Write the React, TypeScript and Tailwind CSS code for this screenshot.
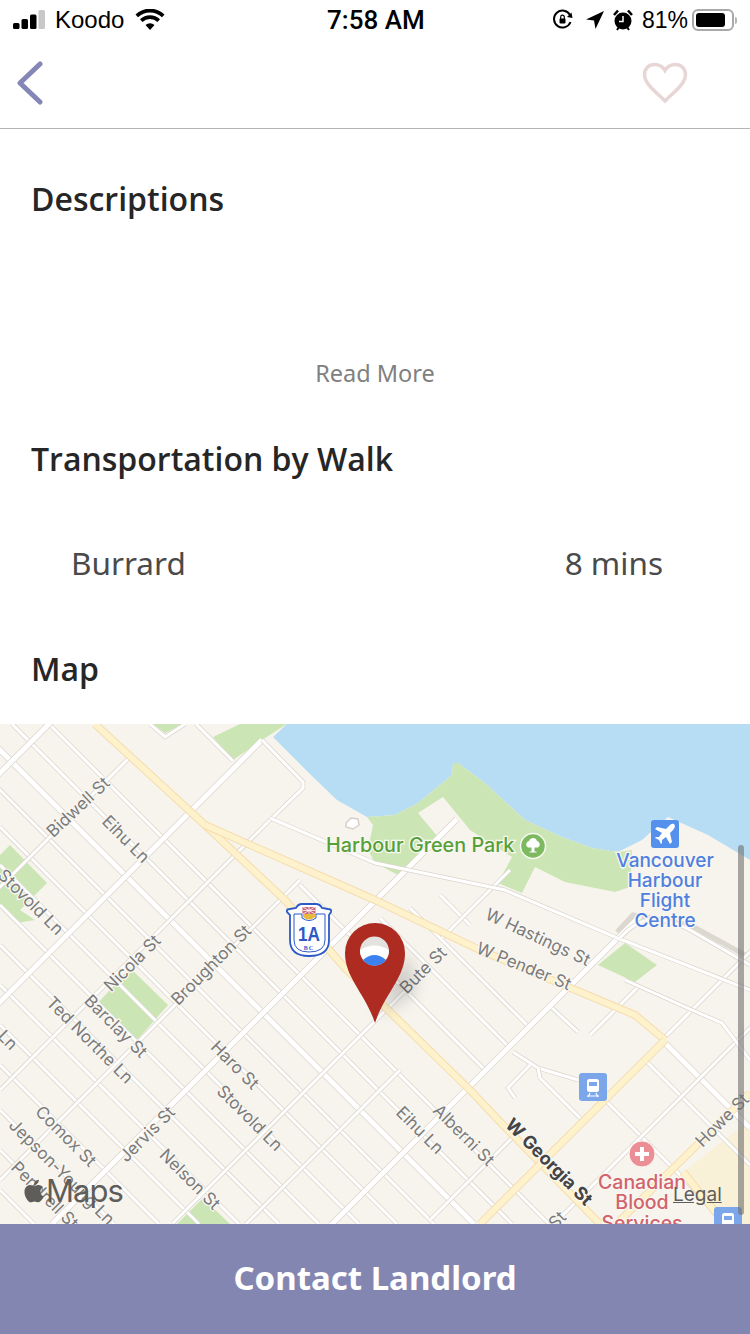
import { FaApple } from 'react-icons/fa';

const headingFont = "font-['Open_Sans',sans-serif]";

// y = x + d
const downRoads: [number, number, number, number?][] = [
  [675, 49, 549], [712, 12, 512], [750, -10, 474, 1], [790, -10, 434], [827, 0, 397], [865, 0, 359],
  [905, 0, 319], [945, 0, 279], [985, 0, 239], [1025, 0, 199], [1065, 0, 159], [1110, 0, 114], [1150, 0, 74], [1190, 0, 34],
  [585, 300, 485], [538, 380, 509], [498, 410, 529], [455, 440, 470], [495, 607, 729], [415, 647, 750], [378, 665, 750, 1],
  [528, 196, 233],
];
// y = c - x
const upRoads: [number, number, number, number?][] = [
  [773, -5, 50, 1], [887, -5, 128], [1002, -5, 262, 1], [1090, 0, 268], [1180, 0, 300], [1276, 52, 457, 1],
  [1396, 173, 420], [1470, 246, 400], [1556, 331, 640, 1], [1650, 430, 520], [1702, 665, 755], [1778, 554, 755],
  [1380, 442, 510], [1625, 590, 640],
];
const polyRoads = [
  "M262 740 L303 782 L303 788 L268 822",
  "M150 724 L165 737 L185 724",
  "M270 818 L375 863 L505 890 L615 937 L750 990",
  "M625 980 L692 1010 L722 1023 L750 1060",
  "M513 1052 L538 1068 L578 1080",
  "M530 1065 L508 1088 L515 1098",
  "M538 1068 L540 1078 L580 1118",
  "M552 1008 L578 1032",
  "M620 938 C640 915 660 915 690 930 L750 965",
];
const yellowRoads = [
  "M95 724 L205 825 L285 900 L345 968 L385 1007 L470 1090 L505 1127 L600 1224",
  "M205 825 L375 900 L480 950 L635 1015 L665 1040",
  "M665 1040 L480 1224",
  "M750 1093 L590 1250",
  "M683 1172 L725 1224",
];
const labels: [string, number, number, number][] = [
  ["Bidwell St", 78, 807, -43], ["Eihu Ln", 126, 839, 45], ["Stovold Ln", 31, 902, 45],
  ["Nicola St", 132, 963, -45], ["Broughton St", 211, 965, -45], ["Barclay St", 116, 1026, 45],
  ["Ted Northe Ln", 90, 1040, 45], ["Haro St", 235, 1065, 45], ["Stovold Ln", 250, 1118, 45],
  ["Comox St", 66, 1136, 45], ["Jervis St", 147, 1134, -45], ["Jepson-Young Ln", 62, 1172, 45],
  ["Pendrell St", 45, 1195, 45], ["Nelson St", 190, 1179, 45], ["Bute St", 423, 970, -45],
  ["W Hastings St", 538, 937, 25], ["W Pender St", 524, 966, 22], ["Alberni St", 464, 1135, 45],
  ["Eihu Ln", 420, 1130, 45], ["Howe St", 722, 1120, -45], ["St", 557, 1220, -45], ["Ln", 8, 1040, 45],
];

function Road({ d, w = 3 }: { d: string; w?: number }) {
  return (
    <>
      <path d={d} fill="none" stroke="#dbd6cd" strokeWidth={w + 1.5} />
      <path d={d} fill="none" stroke="#ffffff" strokeWidth={w} />
    </>
  );
}

function StatusBar() {
  return (
    <div className="h-[40px] flex items-center justify-between pl-[13px] pr-[13px] relative font-['Liberation_Sans',sans-serif] text-black">
      <div className="flex items-center">
        <svg width="34" height="20" viewBox="0 0 34 20">
          <rect x="0" y="13" width="6.500" height="6" rx="1.500" fill="#000" />
          <rect x="8.500" y="9" width="6.500" height="10" rx="1.500" fill="#000" />
          <rect x="17" y="4.500" width="6.500" height="14.500" rx="1.500" fill="#000" />
          <rect x="25.500" y="0" width="6.500" height="19" rx="1.500" fill="#c8c8c8" />
        </svg>
        <span className="text-[24px] ml-[8px] leading-none">Koodo</span>
        <svg width="30" height="22" viewBox="0 0 30 22" className="ml-[11px]">
          <path d="M15 21 L10.500 16 A7 7 0 0 1 19.500 16 Z" fill="#000" />
          <path d="M7.500 13 L5 10.300 A14.500 14.500 0 0 1 25 10.300 L22.500 13 A11 11 0 0 0 7.500 13 Z" fill="#000" />
          <path d="M3 8.200 L0.500 5.500 A21 21 0 0 1 29.500 5.500 L27 8.200 A17.500 17.500 0 0 0 3 8.200 Z" fill="#000" />
        </svg>
      </div>
      <span className="absolute left-[327px] top-[7px] text-[26px] leading-none font-['Roboto',sans-serif] font-medium">7:58 AM</span>
      <div className="flex items-center">
        <svg width="22" height="22" viewBox="0 0 22 22" className="mr-[11px]">
          <path d="M18.500 13 A8.500 8.500 0 1 1 18 6" fill="none" stroke="#000" strokeWidth="2" />
          <path d="M20.500 9 L15 8 L19.500 3.500 Z" fill="#000" />
          <rect x="7.500" y="9.500" width="6" height="5" rx="1" fill="#000" />
          <path d="M8.700 10 V8 A1.800 1.800 0 0 1 12.300 8 V10" fill="none" stroke="#000" strokeWidth="1.200" />
        </svg>
        <svg width="20" height="22" viewBox="0 0 20 22" className="mr-[8px]">
          <path d="M19 2 L10.500 20 L9 11.500 L1 10.500 Z" fill="#000" />
        </svg>
        <svg width="20" height="24" viewBox="0 0 20 24" className="mr-[9px]">
          <circle cx="10" cy="13" r="8.500" fill="#000" />
          <path d="M10 8 V13.500 H6" fill="none" stroke="#fff" strokeWidth="1.500" />
          <path d="M1 7 L5 2.500 M19 7 L15 2.500" stroke="#000" strokeWidth="2.500" />
          <path d="M4 22 L6 19 M16 22 L14 19" stroke="#000" strokeWidth="2" />
        </svg>
        <span className="text-[23px] leading-none">81%</span>
        <div className="ml-[4px] flex items-center">
          <div className="w-[42px] h-[22px] border-2 border-[#a9a9a9] rounded-[6px] p-[2px] flex">
            <div className="w-[29px] bg-black rounded-[3px]" />
          </div>
          <div className="w-[2px] h-[7px] bg-[#b5b5b5] rounded-r ml-[1px]" />
        </div>
      </div>
    </div>
  );
}

function MapDrawing() {
  return (
    <svg width="750" height="500" viewBox="0 724 750 500" className="block font-['Inter',sans-serif]">
      <defs>
        <filter id="pinShadow" x="-100%" y="-100%" width="300%" height="300%"><feGaussianBlur stdDeviation="9" /></filter>
      </defs>
      <rect x="0" y="724" width="750" height="500" fill="#f7f4ee" />
      {/* water and shore */}
      <path d="M287 724 L273 737 L313 777 L337 800 L367 817 L395 815 L418 803 L452 775 L453 763 L458 763 L485 783 L525 820 L562 837 L592 848 L618 852 L642 840 L668 817 L708 835 L750 860 V724 Z" fill="#b6ddf3" />
      <path d="M213 737 L233 760 L262 740 L287 724 L273 737 L313 777 L337 800 L367 817 L373 825 L368 850 L375 863 L402 877 L438 837 L418 813 L443 797 L470 830 L512 857 L498 883 L522 893 L535 867 L565 882 L615 892 L630 887 L632 850 L618 852 L592 848 L562 837 L525 820 L485 783 L458 763 L453 763 L452 775 L418 803 L395 815 L367 817 L337 800 L313 777 L273 737 L287 724 L240 724 Z" fill="#cbe6b4" />
      <path d="M10 845 L47 883 L20 910 L35 920 L17 923 L0 907 V855 Z" fill="#cbe6b4" />
      <path d="M98 1003 L130 968 L168 1005 L137 1040 Z" fill="#cbe6b4" />
      <path d="M153 724 L165 733 L183 724 Z" fill="#cbe6b4" />
      <path d="M177 1224 L203 1198 L230 1224 Z" fill="#cbe6b4" />
      <path d="M598 965 L625 943 L657 965 L635 982 Z" fill="#cbe6b4" />
      <path d="M683 1172 L750 1120 V1224 H722 Z" fill="#f9f0d8" />
      <path d="M617 932 L633 915 L690 925 L745 955" fill="none" stroke="#dcd8cf" strokeWidth="5" />

      {downRoads.map(([d, x1, x2, thick], i) => (
        <Road key={`a${i}`} d={`M${x1} ${x1 + d} L${x2} ${x2 + d}`} w={thick ? 5 : 3} />
      ))}
      {upRoads.map(([c, x1, x2, thick], i) => (
        <Road key={`b${i}`} d={`M${x1} ${c - x1} L${x2} ${c - x2}`} w={thick ? 5 : 3} />
      ))}
      {polyRoads.map((d, i) => <Road key={`p${i}`} d={d} />)}
      {yellowRoads.map((d, i) => (
        <g key={`y${i}`}>
          <path d={d} fill="none" stroke="#f5dcae" strokeWidth="8" />
          <path d={d} fill="none" stroke="#fdf2cb" strokeWidth="6" />
        </g>
      ))}

      {labels.map(([t, x, y, r], i) => (
        <text key={i} x={x} y={y + 6} textAnchor="middle" transform={`rotate(${r} ${x} ${y})`} fontSize="17" fill="#7b7b7b" stroke="#f9f7f2" strokeWidth="2.500" paintOrder="stroke">{t}</text>
      ))}
      <text x="549" y="1168" textAnchor="middle" transform="rotate(45 549 1162)" fontSize="18" fontWeight="700" fill="#444444" stroke="#f9f7f2" strokeWidth="2.500" paintOrder="stroke">W Georgia St</text>

      <text x="326" y="852" fontSize="19.800" fontWeight="500" fill="#55a037" stroke="#f9f7f2" strokeWidth="2.500" paintOrder="stroke">Harbour Green Park</text>
      <circle cx="533" cy="846" r="12.500" fill="#7cb95f" stroke="#f9f7f2" strokeWidth="1.500" />
      <path d="M533 838 a4 4 0 0 1 4 3 a3.500 3.500 0 0 1 1 6.500 h-3.500 v4 h2 v1 h-7 v-1 h2 v-4 h-3.500 a3.500 3.500 0 0 1 1 -6.500 a4 4 0 0 1 3.500 -3 z" fill="#fff" />
      <path d="M346 823 L351 818 L358 819 L359 825 L353 829 L346 827 Z" fill="#fff" stroke="#d5d1c9" strokeWidth="1.500" />

      <rect x="651" y="820" width="28" height="28" rx="3" fill="#5590ec" />
      <path d="M674 824 c-2 -1 -4 1 -5 2 l-3 3 l-9 -2 l-2 2 l7 4 l-3 4 l-3 0 l-1 1 l4 2 l2 4 l1 -1 l0 -3 l4 -3 l4 7 l2 -2 l-2 -9 l3 -3 c1 -1 3 -4 1 -6 z" fill="#fff" />
      {[["Vancouver", 867], ["Harbour", 887], ["Flight", 907], ["Centre", 927]].map(([t, y]) => (
        <text key={t} x="665" y={y} textAnchor="middle" fontSize="19" fontWeight="500" fill="#4f80df" stroke="#f9f7f2" strokeWidth="2.500" paintOrder="stroke">{t}</text>
      ))}

      <rect x="579" y="1073" width="28" height="28" rx="3" fill="#7ba6ea" />
      <rect x="587" y="1079" width="12" height="13" rx="2.500" fill="#fff" />
      <rect x="589" y="1082" width="8" height="4" fill="#7ba6ea" />
      <path d="M588 1097 L590 1093 M598 1097 L596 1093 M587 1096 H599" stroke="#fff" strokeWidth="1.200" />

      <rect x="714" y="1207" width="28" height="28" rx="3" fill="#7ba6ea" />
      <rect x="722" y="1213" width="12" height="13" rx="2.500" fill="#fff" />
      <rect x="724" y="1216" width="8" height="4" fill="#7ba6ea" />

      <circle cx="642" cy="1154" r="13" fill="#ec8e95" stroke="#f9f7f2" strokeWidth="1" />
      <path d="M642 1147 V1161 M635 1154 H649" stroke="#fff" strokeWidth="4" />
      {[["Canadian", 1189], ["Blood", 1209], ["Services", 1230]].map(([t, y]) => (
        <text key={t} x="642" y={y} textAnchor="middle" fontSize="19.500" fontWeight="500" fill="#d2636c" stroke="#f9f7f2" strokeWidth="2.500" paintOrder="stroke">{t}</text>
      ))}

      {/* 1A highway shield */}
      <path d="M287 912 Q286 909 290 909 L296 908 Q298 904 302 904 H316 Q320 904 322 908 L328 909 Q332 909 331 912 L329 915 V940 Q329 956 309 956 Q290 956 290 940 V915 Z" fill="#fff" stroke="#2d59c8" strokeWidth="1.800" />
      <path d="M294 914 H302 V918 Q309 923 316 918 V914 H325 V940 Q325 952 309 952 Q294 952 294 940 Z" fill="#fff" stroke="#2d59c8" strokeWidth="1" />
      <rect x="302.500" y="907" width="13" height="7" fill="#c9657a" />
      <path d="M303 907 L315 914 M315 907 L303 914 M309 907 V914 M303 910.500 H315" stroke="#fff" strokeWidth="0.800" />
      <path d="M303 914 H315 V917 Q309 922 303 917 Z" fill="#e8b93d" />
      <text x="309" y="941" textAnchor="middle" fontSize="21" fontWeight="700" fill="#2d59c8" fontFamily="'Liberation Sans',sans-serif" textLength="22" lengthAdjust="spacingAndGlyphs">1A</text>
      <text x="309" y="950" textAnchor="middle" fontSize="6" fontWeight="700" fill="#2d59c8" fontFamily="'Liberation Serif',serif" letterSpacing="1">BC</text>

      {/* pin */}
      <path d="M378 1015 L405 950 L415 990 Z" fill="#000" opacity="0.2" filter="url(#pinShadow)" />
      <path d="M375 1023 C365 993 345 978 345 953 A30 30 0 0 1 405 953 C405 978 385 993 375 1023 Z" fill="#ae2b22" />
      <circle cx="374.500" cy="951" r="14.500" fill="#e4e2de" />
      <path d="M360 950 Q374.500 941 389 950 A14.500 14.500 0 0 1 360 950 Z" fill="#fff" />
      <path d="M363 960 Q374.500 950 386 960 A14.500 14.500 0 0 1 363 960 Z" fill="#3b82f0" />
    </svg>
  );
}

export default function App() {
  return (
    <main className="w-[750px] h-[1334px] bg-white overflow-hidden flex flex-col font-['Noto_Sans',sans-serif]">
      <StatusBar />
      <div className="h-[89px] border-b border-[#b5b5b5] flex items-center justify-between pl-[16px] pr-[62px] pb-[2px]">
        <svg width="30" height="44" viewBox="0 0 30 44">
          <path d="M24 3 L4 22 L24 41" fill="none" stroke="#8586b8" strokeWidth="5" strokeLinecap="round" strokeLinejoin="round" />
        </svg>
        <svg width="46" height="42" viewBox="0 0 46 42">
          <path d="M23 39 C14 30 2.500 22 2.500 12.500 C2.500 6.500 7 2.500 12.500 2.500 C17 2.500 21 5 23 8.500 C25 5 29 2.500 33.500 2.500 C39 2.500 43.500 6.500 43.500 12.500 C43.500 22 32 30 23 39 Z" fill="none" stroke="#e8d6d6" strokeWidth="3.500" />
        </svg>
      </div>

      <section className="px-[31px]">
        <h2 className={`${headingFont} mt-[50px] text-[32px] leading-[40px] font-semibold text-[#262626]`}>Descriptions</h2>
        <p className="mt-[139px] text-center text-[23.500px] leading-[30px] text-[#808080]">Read More</p>
        <h2 className={`${headingFont} mt-[51px] text-[32px] leading-[40px] font-semibold text-[#262626]`}>Transportation by Walk</h2>
        <div className="mt-[64px] pl-[40px] pr-[56px] flex items-center justify-between text-[31.500px] leading-[40px] text-[#4a4a4a]">
          <span>Burrard</span>
          <span>8 mins</span>
        </div>
        <h2 className={`${headingFont} mt-[66px] text-[32px] leading-[40px] font-semibold text-[#262626]`}>Map</h2>
      </section>

      <div className="relative mt-[35px] h-[500px] overflow-hidden">
        <MapDrawing />
        <div className="absolute left-[21px] top-[449px] flex items-center text-[#5f5d5a] font-['Inter',sans-serif]">
          <FaApple size={26} />
          <span className="text-[31px] leading-[36px] -ml-[1px] tracking-[-1px]">Maps</span>
        </div>
        <span className="absolute left-[673px] top-[459px] text-[19px] leading-[24px] text-[#5f5d5a] underline font-['Inter',sans-serif]">Legal</span>
        <div className="absolute left-[738px] top-[121px] w-[6px] h-[370px] rounded-full bg-[#6e6e6e]/60" />
      </div>

      <button className="h-[110px] w-full pb-[2px] bg-[#8486b2] text-white text-[33px] font-bold font-['Noto_Sans',sans-serif]">Contact Landlord</button>
    </main>
  );
}
